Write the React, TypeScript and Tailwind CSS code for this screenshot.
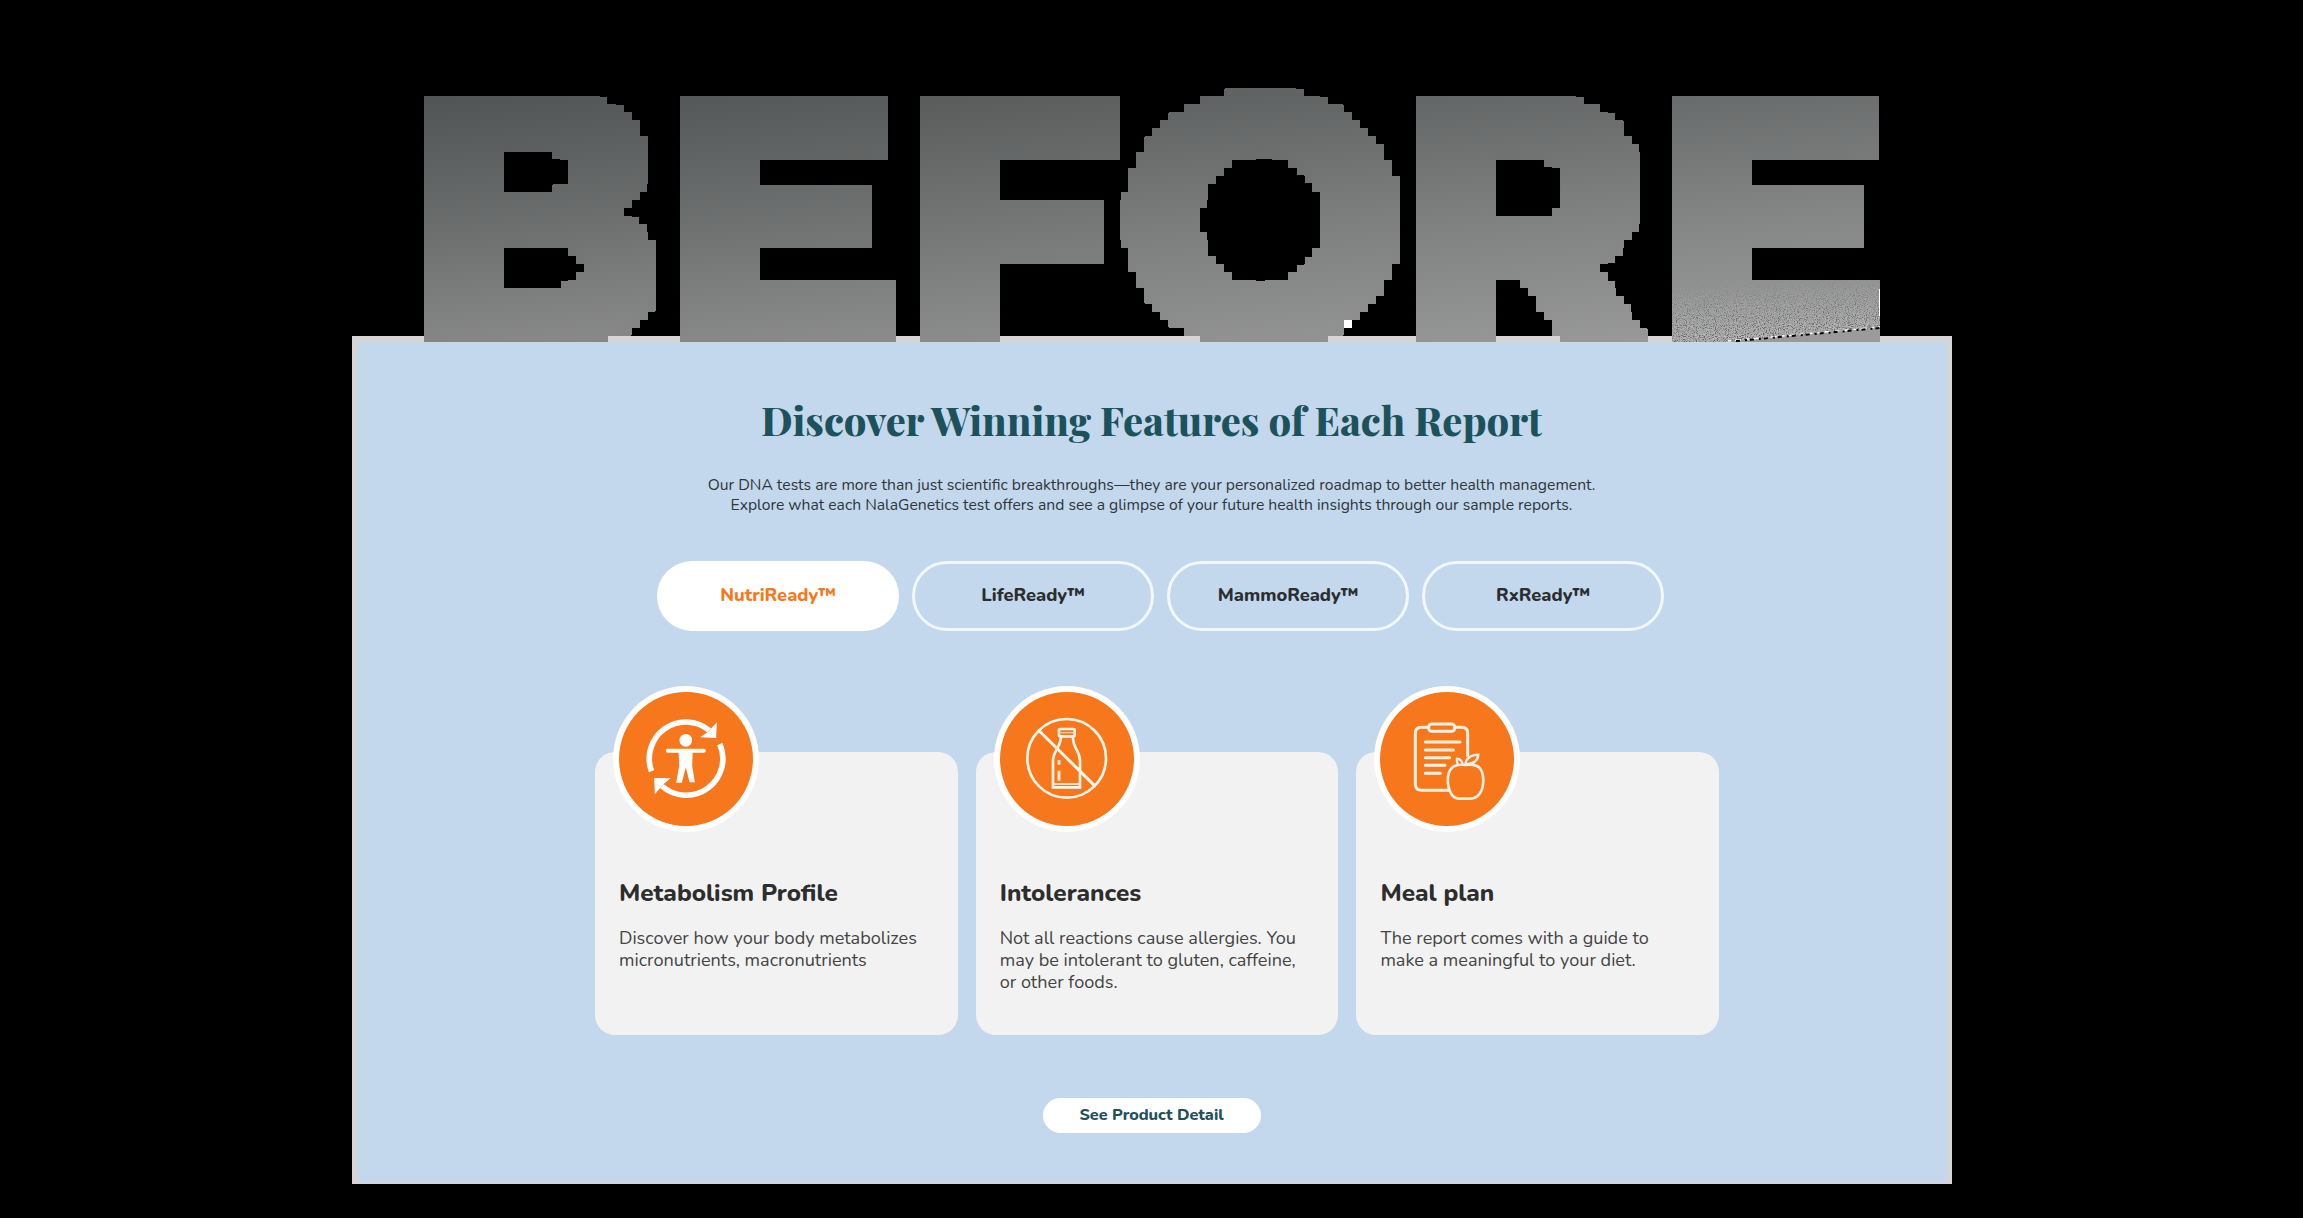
import React from "react";

const MetabolismIcon = () => (
  <svg viewBox="10.5 6 438 438" className="size-full" fill="none" stroke="#fff">
    <path d="M126 262A110 110 0 0 1 299 139" strokeWidth="17" />
    <path d="M331 180A110 110 0 0 1 157 306" strokeWidth="17" />
    <path d="M322 115L320 162L272 160L296 143Z" fill="#fff" stroke="none" />
    <path d="M134 282L183 283L160 302L136 331Z" fill="#fff" stroke="none" />
    <circle cx="229" cy="169" r="19" fill="#fff" stroke="none" />
    <path d="M175 200H283" strokeWidth="12" strokeLinecap="round" />
    <path d="M207 196H250L248 245L256 295H240L229 250L217 296H200L209 245Z" fill="#fff" stroke="none" />
  </svg>
);

const IntoleranceIcon = () => (
  <svg viewBox="12 6 438 438" className="size-full" fill="none" stroke="#fff4e8" strokeWidth="8">
    <circle cx="230" cy="223" r="118" />
    <path d="M148 141L313 304" strokeWidth="9" />
    <rect x="207" y="135" width="47" height="22" rx="3" />
    <path d="M211 146H250" strokeWidth="4" opacity=".6" />
    <path d="M213 157C213 190 190 200 189 228V310H270V228C268 198 247 190 249 157" />
    <path d="M192 300H268" strokeWidth="5" />
    <path d="M207 228V242M207 260V290" strokeWidth="9" opacity=".85" />
  </svg>
);

const MealPlanIcon = () => (
  <svg viewBox="9 6 438 438" className="size-full" fill="none" stroke="#fff0e2" strokeWidth="9">
    <path d="M172 130H151Q133 130 133 148V300Q133 319 152 319H234" />
    <path d="M252 130H273Q290 130 290 148V218" />
    <rect x="173" y="120" width="78" height="22" rx="9" />
    <g strokeLinecap="round">
      <path d="M163 174H267M163 198H247M163 221H236M163 244H222M163 268H208" />
    </g>
    <path d="M284 243C268 241 254 241 243 251C226 267 227 308 241 330C247 340 256 344 268 344H298C311 344 320 338 327 328C340 308 341 268 325 251C314 241 299 241 284 243Z" strokeWidth="8" />
    <path d="M284 241C283 224 298 213 322 212C321 230 307 240 284 241Z" strokeWidth="7" />
    <path d="M275 243C274 232 268 225 258 224C257 232 258 238 262 243" strokeWidth="7" />
  </svg>
);

const letters = [
  { char: "B", className: "origin-left scale-x-[0.97] mr-[-10px] bg-[linear-gradient(175deg,#3c4040,#6c6e6e_65%,#8a8a8a)]" },
  { char: "E", className: "origin-left scale-x-[1.03] mr-[5px] bg-[linear-gradient(175deg,#404444,#6f7171_65%,#8b8b8b)]" },
  { char: "F", className: "mr-[-7px] bg-[linear-gradient(175deg,#454747,#747676_65%,#8e8e8e)]" },
  { char: "O", className: "mr-[-11px] bg-[linear-gradient(175deg,#484c4c,#7c7d7d_65%,#949494)]" },
  { char: "R", className: "origin-left scale-x-[0.99] mr-px bg-[linear-gradient(175deg,#4d5151,#808181_65%,#989898)]" },
  { char: "E", className: "origin-left scale-x-[1.01] bg-[linear-gradient(175deg,#525656,#858686_65%,#9c9c9c)]" },
];

const tabs = ["NutriReady™", "LifeReady™", "MammoReady™", "RxReady™"];

const cards = [
  {
    title: "Metabolism Profile",
    text: "Discover how your body metabolizes micronutrients, macronutrients",
    Icon: MetabolismIcon,
  },
  {
    title: "Intolerances",
    text: "Not all reactions cause allergies. You may be intolerant to gluten, caffeine, or other foods.",
    Icon: IntoleranceIcon,
  },
  {
    title: "Meal plan",
    text: "The report comes with a guide to make a meaningful to your diet.",
    Icon: MealPlanIcon,
  },
];

/* Snaps a shape to an 8px block grid. */
const BlockFilter = () => (
  <svg className="absolute size-0" aria-hidden="true">
    <filter
      id="blocks"
      filterUnits="userSpaceOnUse"
      x="0"
      y="0"
      width="2303"
      height="352"
      colorInterpolationFilters="sRGB"
    >
      <feMorphology in="SourceGraphic" operator="dilate" radius="5" />
      <feComponentTransfer result="grown">
        <feFuncA type="discrete" tableValues="0 1" />
      </feComponentTransfer>
      <feFlood x="3" y="3" width="2" height="2" floodColor="#000" />
      <feComposite x="0" y="0" width="8" height="8" />
      <feTile x="0" y="0" width="2303" height="352" result="grid" />
      <feComposite in="grown" in2="grid" operator="in" />
      <feMorphology operator="dilate" radius="3" />
    </filter>
  </svg>
);

/* Grain over the foot of the last letter. */
const Grain = () => (
  <svg className="absolute left-[1672px] top-[272px] h-[70px] w-[208px]" viewBox="0 0 208 70" aria-hidden="true">
    <defs>
      <filter id="grain" x="0" y="0" width="1" height="1">
        <feTurbulence type="fractalNoise" baseFrequency="0.9" numOctaves="2" seed="4" />
        <feColorMatrix values="3 0 0 0 -1  3 0 0 0 -1  3 0 0 0 -1  0 0 0 0 1" />
      </filter>
      <linearGradient id="fade" x1="0" y1="0" x2="0.15" y2="1">
        <stop offset="0" stopColor="#fff" stopOpacity="0" />
        <stop offset="1" stopColor="#fff" stopOpacity=".35" />
      </linearGradient>
      <mask id="fadeMask">
        <path d="M0 12H208V56L50 70H0Z" fill="url(#fade)" />
      </mask>
    </defs>
    <rect y="12" width="208" height="58" filter="url(#grain)" mask="url(#fadeMask)" />
    <path d="M56 69L208 55" stroke="#fff" strokeWidth="1.5" strokeDasharray="3 4 6 5" />
    <path d="M64 69L208 56" stroke="#000" strokeWidth="2" strokeDasharray="4 5 2 3" />
    <path d="M207.5 17V44" stroke="#fff" />
  </svg>
);

export default function App() {
  return (
    <main className="relative h-[1218px] w-[2303px] overflow-hidden bg-black font-['Nunito','Open_Sans',sans-serif]">
      <BlockFilter />
      <h1 className="relative z-10 flex h-[344px] w-full pl-[407px] font-['Montserrat','Inter',sans-serif] text-[346px] font-extrabold leading-[434px] text-transparent [filter:url(#blocks)]">
        {letters.map(({ char, className }, i) => (
          <span key={i} className={`block h-full bg-clip-text ${className}`}>
            {char}
          </span>
        ))}
      </h1>
      <div className="absolute left-0 top-0 z-10">
        <Grain />
        <div className="absolute left-[1344px] top-[320px] size-2 bg-white" />
      </div>

      <section className="-mt-2 ml-[352px] h-[848px] w-[1600px] bg-[#d5d4d6] pb-0.5 pl-1.5 pr-[5px] pt-1.5">
        <div className="relative z-20 flex h-full flex-col bg-[#c3d8ec] pt-[54px]">
          <h2 className="pr-[2px] text-center font-['Playfair_Display','Liberation_Serif',serif] text-[39.8px] font-extrabold leading-[48px] text-[#1c525b]">
            Discover Winning Features of Each Report
          </h2>
          <p className="mt-[31px] pr-[2px] text-center text-[15.7px] leading-5 text-[#30363c]">
            Our DNA tests are more than just scientific breakthroughs—they are your personalized roadmap to better health management.
            <br />
            Explore what each NalaGenetics test offers and see a glimpse of your future health insights through our sample reports.
          </p>

          <nav className="ml-[299px] mt-[46px] flex gap-[13px]">
            {tabs.map((tab, i) => (
              <button
                key={tab}
                className={
                  i === 0
                    ? "h-[70px] w-[242px] rounded-full bg-white text-[18.3px] font-extrabold text-[#f7781c]"
                    : "h-[70px] w-[242px] rounded-full border-[3px] border-[#f1f7fc] text-[18.3px] font-extrabold text-[#2b2d30]"
                }
              >
                {tab}
              </button>
            ))}
          </nav>

          <div className="ml-[237px] mt-[121px] flex gap-[18.2px]">
            {cards.map(({ title, text, Icon }) => (
              <article
                key={title}
                className="relative h-[283px] w-[362.5px] rounded-[20px] bg-[#f2f2f2] pl-6 pr-[38px] pt-[126px]"
              >
                <div className="absolute left-[18px] top-[-66px] size-[146px] rounded-full bg-white p-1.5">
                  <div className="size-full rounded-full bg-[#f7781c]" />
                  <div className="absolute inset-0">
                    <Icon />
                  </div>
                </div>
                <h3 className="text-[24.3px] font-extrabold leading-[30px] text-[#2d2d2d]">{title}</h3>
                <p className="mt-[19px] text-[18.1px] leading-[22px] text-[#444]">{text}</p>
              </article>
            ))}
          </div>

          <button className="mr-[2px] mt-[63px] h-[35px] w-[218px] self-center rounded-full bg-white text-[16.2px] font-extrabold text-[#215259]">
            See Product Detail
          </button>
        </div>
      </section>
    </main>
  );
}
